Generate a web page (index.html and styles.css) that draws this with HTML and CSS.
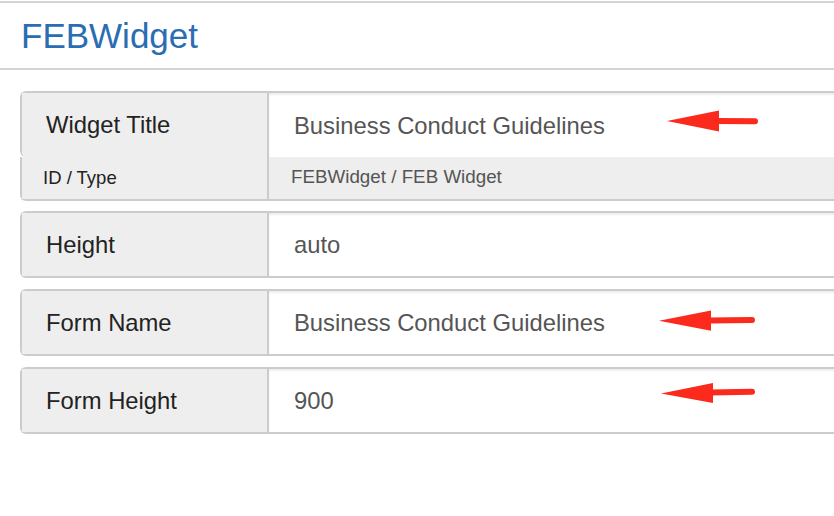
FILE: index.html
```html
<!DOCTYPE html>
<html>
<head>
<meta charset="utf-8">
<link rel="stylesheet" href="styles.css">
</head>
<body>
<header class="page-header">
  <h1 class="title">FEBWidget</h1>
</header>
<main class="form">
  <div class="group group-top">
    <div class="label">Widget Title</div>
    <div class="value">Business Conduct Guidelines</div>
    <svg class="arrow" viewBox="0 0 150 66" width="150" height="66">
      <path d="M27 30 L79 19.5 L79 40.5 Z" fill="#fb2a1c"/>
      <line x1="76" y1="30" x2="115" y2="30.3" stroke="#fb2a1c" stroke-width="6" stroke-linecap="round"/>
    </svg>
  </div>
  <div class="group group-sub">
    <div class="label label-sm">ID / Type</div>
    <div class="value value-sm">FEBWidget / FEB Widget</div>
  </div>
  <div class="group">
    <div class="label">Height</div>
    <div class="value">auto</div>
  </div>
  <div class="group">
    <div class="label">Form Name</div>
    <div class="value">Business Conduct Guidelines</div>
    <svg class="arrow" viewBox="0 0 150 66" width="150" height="66">
      <path d="M19 31.7 L71 21.5 L71 41.7 Z" fill="#fb2a1c"/>
      <line x1="68" y1="31.5" x2="112" y2="31" stroke="#fb2a1c" stroke-width="6" stroke-linecap="round"/>
    </svg>
  </div>
  <div class="group">
    <div class="label">Form Height</div>
    <div class="value">900</div>
    <svg class="arrow" viewBox="0 0 150 66" width="150" height="66">
      <path d="M21 26.5 L73 16 L73 36 Z" fill="#fb2a1c"/>
      <line x1="70" y1="25.5" x2="112" y2="24.8" stroke="#fb2a1c" stroke-width="6" stroke-linecap="round"/>
    </svg>
  </div>
</main>
</body>
</html>
```

FILE: styles.css
```css
html, body {
  margin: 0;
  padding: 0;
  background: #fff;
  overflow: hidden;
}

body {
  font-family: "Liberation Sans", Arial, sans-serif;
  width: 834px;
  height: 516px;
}

.page-header {
  margin-top: 1px;
  border-top: 2px solid #d4d4d4;
  border-bottom: 2px solid #d4d4d4;
  padding: 13px 0 12px 21px;
}

.title {
  margin: 0;
  font-size: 35px;
  line-height: 40px;
  font-weight: normal;
  color: #2a6db1;
}

.form {
  padding: 21px 0 0 20px;
  width: 900px;
}

.group {
  position: relative;
  display: flex;
  height: 67px;
  box-sizing: border-box;
  border: 2px solid #cccccc;
  border-right: none;
  border-radius: 6px 0 0 6px;
  margin-bottom: 11px;
}

.group-top {
  height: 66px;
  border-bottom: none;
  margin-bottom: 0;
  border-radius: 6px 0 0 6px;
}

.group-sub {
  height: 44px;
  border-top: none;
  border-radius: 0 0 0 6px;
  margin-bottom: 10px;
}

.label {
  width: 247px;
  flex: none;
  box-sizing: border-box;
  background: #eeeeee;
  border-right: 2px solid #cccccc;
  display: flex;
  align-items: center;
  padding-left: 24px;
  font-size: 23.8px;
  color: #222222;
}

.group-top .label {
  border-bottom-left-radius: 5px;
}

.value {
  flex: 1;
  background: #ffffff;
  display: flex;
  align-items: center;
  padding-left: 25px;
  padding-top: 1px;
  font-size: 23.8px;
  color: #555555;
  box-shadow: inset 0 2px 2px rgba(0, 0, 0, 0.07);
}

.label-sm {
  font-size: 18.5px;
  padding-left: 21px;
  padding-bottom: 1px;
  padding-top: 0;
}

.value-sm {
  background: #eeeeee;
  box-shadow: none;
  font-size: 18.8px;
  padding-left: 22px;
  padding-bottom: 2px;
  padding-top: 0;
}

.arrow {
  position: absolute;
  left: 618px;
  top: -2px;
}
```
